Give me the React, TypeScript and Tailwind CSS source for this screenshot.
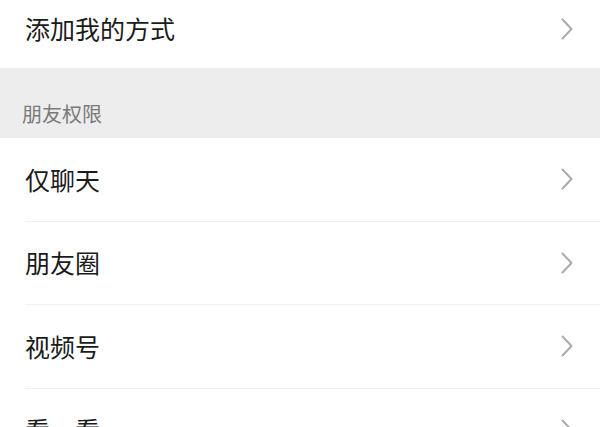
const FONT = { fontFamily: '"Noto Sans CJK SC", "Noto Sans", sans-serif' };

const Chevron = () => (
  <svg width="12" height="22" viewBox="0 0 12 22" fill="none" className="shrink-0">
    <path d="M1.5 1.5 L10.5 11 L1.5 20.5" stroke="#ababab" strokeWidth="2" strokeLinecap="round" strokeLinejoin="round" />
  </svg>
);

const Row = ({ label, divider = true }: { label: string; divider?: boolean }) => (
  <div className="flex h-[83.5px] items-center pl-[25px]">
    <div className={`flex h-full flex-1 items-center pr-[27px] ${divider ? "border-b border-[#f0f0f0]" : ""}`}>
      <span className="flex-1 text-[25px] text-[#1b1b1b]">{label}</span>
      <Chevron />
    </div>
  </div>
);

const App = () => {
  const items = ["仅聊天", "朋友圈", "视频号", "看一看"];
  return (
    <div className="h-[427px] w-[600px] overflow-hidden bg-white" style={FONT}>
      <div className="flex h-[68px] items-center pb-[10px] pl-[25px] pr-[27px]">
        <span className="flex-1 text-[25px] text-[#1b1b1b]">添加我的方式</span>
        <Chevron />
      </div>
      <div className="flex h-[70px] items-end bg-[#ededed] pb-[9px] pl-[22px]">
        <span className="text-[20px] text-[#7a7a7a]">朋友权限</span>
      </div>
      {items.map(label => (
        <Row key={label} label={label} />
      ))}
    </div>
  );
};

export default App;
